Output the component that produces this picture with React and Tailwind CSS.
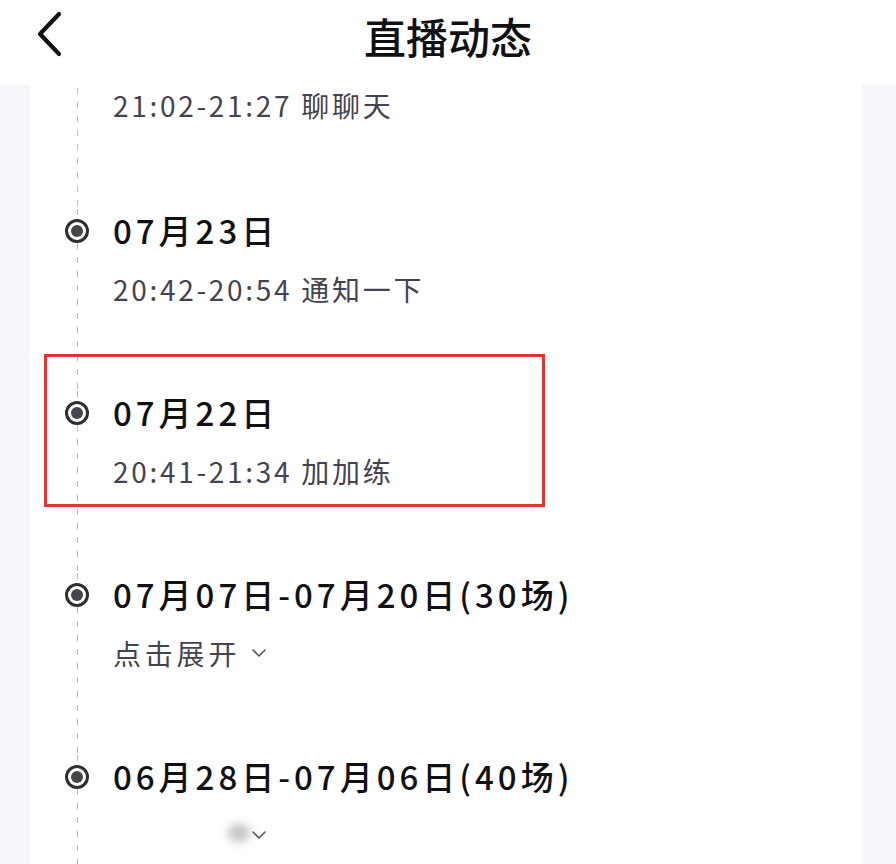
import React from 'react';

const FONT = "font-['Noto_Sans_CJK_SC','Noto_Sans',sans-serif]";

const Dashes = ({ className = '' }) => (
  <div
    className={`w-px bg-[repeating-linear-gradient(to_bottom,#b9b9bf_0px,#b9b9bf_6px,transparent_6px,transparent_14px)] ${className}`}
  />
);

const Dot = () => (
  <div className="w-6 h-6 shrink-0 rounded-full border-[3px] border-[#2e2e33] bg-white flex items-center justify-center">
    <div className="w-[12px] h-[12px] rounded-full bg-[#45454c]" />
  </div>
);

const Chevron = () => (
  <svg width="14" height="8" viewBox="0 0 14 8" fill="none" className="ml-[12px]">
    <polyline points="1,1 7,7 13,1" stroke="#55555f" strokeWidth="1.6" strokeLinecap="round" strokeLinejoin="round" />
  </svg>
);

const items = [
  { title: '07月23日', sub: '20:42-20:54 通知一下' },
  { title: '07月22日', sub: '20:41-21:34 加加练', marked: true },
  { title: '07月07日-07月20日(30场)', expand: true },
  { title: '06月28日-07月06日(40场)', expand: true, erased: true },
];

const Item = ({ item }) => (
  <div className="relative flex h-[182px] shrink-0">
    {item.marked && (
      <div className="absolute -left-[21px] -top-[37px] w-[501px] h-[153px] border-[3px] border-[#e2352f] pointer-events-none" />
    )}
    {/* timeline column */}
    <div className="w-6 flex flex-col items-center">
      <Dashes className="h-[10px]" />
      <Dot />
      <Dashes className="flex-1" />
    </div>
    <div className="ml-6 flex flex-col">
      <div className="h-[44px] flex items-center text-[33px] font-medium tracking-[4px] text-[#111114]">
        {item.title}
      </div>
      {item.sub && (
        <div className="mt-4 h-10 flex items-center text-[28px] tracking-[2.7px] text-[#45434f]">
          {item.sub}
        </div>
      )}
      {item.expand && (
        <div className="mt-4 h-10 flex items-center text-[28px] tracking-[3.8px] text-[#45434f]">
          {item.erased ? (
            <span className="relative">
              <span className="text-transparent">点击展开</span>
              <span className="absolute right-[-10px] top-[10px] w-[22px] h-[18px] rounded-full bg-[#9d9da3] blur-[5px] opacity-60" />
            </span>
          ) : (
            <span>点击展开</span>
          )}
          <Chevron />
        </div>
      )}
    </div>
  </div>
);

export default function App() {
  return (
    <div className={`w-[896px] h-[864px] flex flex-col bg-[#f5f6f9] overflow-hidden ${FONT}`}>
      {/* Header */}
      <div className="h-[85px] shrink-0 bg-white relative flex items-start">
        <button className="absolute left-[34px] top-[11px] w-[30px] h-[46px] flex items-center justify-center">
          <svg width="28" height="46" viewBox="0 0 28 46" fill="none">
            <polyline points="24,3 5,23 24,43" stroke="#111" strokeWidth="4.2" strokeLinecap="round" strokeLinejoin="round" />
          </svg>
        </button>
        <div className="w-full h-[70px] flex items-center justify-center text-[42px] font-medium text-[#111114]">
          直播动态
        </div>
      </div>

      {/* Timeline card */}
      <div className="flex-1 ml-[30px] mr-[34px] bg-white flex flex-col pl-[35px] overflow-hidden">
        <div className="flex h-[124px] shrink-0">
          <div className="w-6 flex flex-col items-center pt-[3px]">
            <Dashes className="flex-1" />
          </div>
          <div className="ml-6">
            <div className="h-10 flex items-center text-[28px] tracking-[2.7px] text-[#45434f]">
              21:02-21:27 聊聊天
            </div>
          </div>
        </div>
        {items.map((item) => (
          <Item key={item.title} item={item} />
        ))}
      </div>
    </div>
  );
}
